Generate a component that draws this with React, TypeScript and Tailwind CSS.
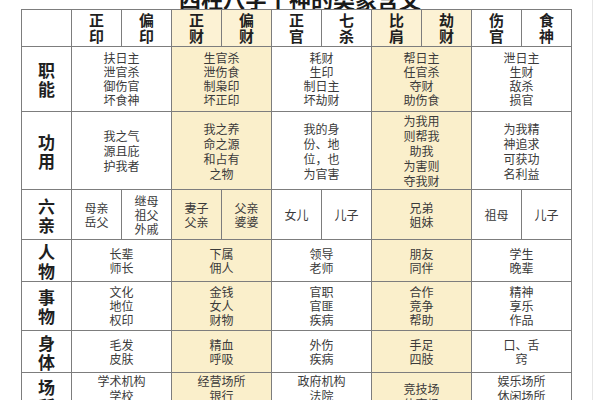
import React from 'react';

type Cell = { span: number; lines: string[] };

const heads = ['正印', '偏印', '正财', '偏财', '正官', '七杀', '比肩', '劫财', '伤官', '食神'];
const yellow = [2, 3, 6, 7];

function pairs(...groups: string[][]): Cell[] {
  return groups.map((lines) => ({ span: 2, lines }));
}

const rows: { label: string; h: string; lead: string; cells: Cell[] }[] = [
  {
    label: '职能',
    h: 'h-[65px]',
    lead: 'leading-[14px]',
    cells: pairs(
      ['扶日主', '泄官杀', '御伤官', '坏食神'],
      ['生官杀', '泄伤食', '制枭印', '坏正印'],
      ['耗财', '生印', '制日主', '坏劫财'],
      ['帮日主', '任官杀', '夺财', '助伤食'],
      ['泄日主', '生财', '敌杀', '损官'],
    ),
  },
  {
    label: '功用',
    h: 'h-[78px]',
    lead: 'leading-[15px]',
    cells: pairs(
      ['我之气', '源且庇', '护我者'],
      ['我之养', '命之源', '和占有', '之物'],
      ['我的身', '份、地', '位，也', '为官害'],
      ['为我用', '则帮我', '助我', '为害则', '夺我财'],
      ['为我精', '神追求', '可获功', '名利益'],
    ),
  },
  {
    label: '六亲',
    h: 'h-[50px]',
    lead: 'leading-[14px]',
    cells: [
      { span: 1, lines: ['母亲', '岳父'] },
      { span: 1, lines: ['继母', '祖父', '外戚'] },
      { span: 1, lines: ['妻子', '父亲'] },
      { span: 1, lines: ['父亲', '婆婆'] },
      { span: 1, lines: ['女儿'] },
      { span: 1, lines: ['儿子'] },
      { span: 2, lines: ['兄弟', '姐妹'] },
      { span: 1, lines: ['祖母'] },
      { span: 1, lines: ['儿子'] },
    ],
  },
  {
    label: '人物',
    h: 'h-[42px]',
    lead: 'leading-[14px]',
    cells: pairs(['长辈', '师长'], ['下属', '佣人'], ['领导', '老师'], ['朋友', '同伴'], ['学生', '晚辈']),
  },
  {
    label: '事物',
    h: 'h-[49px]',
    lead: 'leading-[14px]',
    cells: pairs(
      ['文化', '地位', '权印'],
      ['金钱', '女人', '财物'],
      ['官职', '官匪', '疾病'],
      ['合作', '竞争', '帮助'],
      ['精神', '享乐', '作品'],
    ),
  },
  {
    label: '身体',
    h: 'h-[42px]',
    lead: 'leading-[14px]',
    cells: pairs(['毛发', '皮肤'], ['精血', '呼吸'], ['外伤', '疾病'], ['手足', '四肢'], ['口、舌', '窍']),
  },
  {
    label: '场所',
    h: 'h-[46px]',
    lead: 'leading-[15px]',
    cells: pairs(
      ['学术机构', '学校', '出版社'],
      ['经营场所', '银行', '市场'],
      ['政府机构', '法院', '警局'],
      ['竞技场', '体育场'],
      ['娱乐场所', '休闲场所', '剧院'],
    ),
  },
];

export default function App() {
  return (
    <div className="w-[600px] h-[400px] overflow-hidden bg-white font-['Noto_Sans_CJK_SC',sans-serif] relative">
      <div className="absolute top-0 bottom-0 left-[592px] w-px bg-[#e6e6e6]" />
      <div className="h-[9px] overflow-hidden flex justify-center items-end">
        <span className="text-[22px] leading-[22px] font-bold text-[#1a1a1a] whitespace-nowrap">
          四柱八字十神的类象含义
        </span>
      </div>
      <div className="ml-[21px] w-[551px] border-l border-t border-[#7d7d7d] grid grid-cols-[repeat(11,50px)]">
        <div className="h-[37px] border-r border-b border-[#7d7d7d]" />
        {heads.map((h, i) => (
          <div
            key={h}
            className={`h-[37px] border-r border-b border-[#7d7d7d] flex flex-col items-center justify-center text-[15px] leading-[16px] font-bold text-[#1f1f1f] ${
              yellow.includes(i) ? 'bg-[#fcf2d4]' : 'bg-white'
            }`}
          >
            <span>{h[0]}</span>
            <span>{h[1]}</span>
          </div>
        ))}
        {rows.map((row) => {
          let col = 0;
          return (
            <React.Fragment key={row.label}>
              <div
                className={`${row.h} border-r border-b border-[#7d7d7d] flex flex-col items-center justify-center text-[17px] leading-[19px] font-bold text-[#1f1f1f]`}
              >
                <span>{row.label[0]}</span>
                <span>{row.label[1]}</span>
              </div>
              {row.cells.map((c, j) => {
                const isYellow = yellow.includes(col);
                col += c.span;
                return (
                  <div
                    key={j}
                    className={`${row.h} ${c.span === 2 ? 'col-span-2' : ''} ${row.lead} border-r border-b border-[#7d7d7d] flex flex-col items-center justify-center text-[12px] text-[#3a3a3a] whitespace-nowrap ${
                      isYellow ? 'bg-[#faefcb]' : 'bg-white'
                    }`}
                  >
                    {c.lines.map((l, k) => (
                      <span key={k}>{l}</span>
                    ))}
                  </div>
                );
              })}
            </React.Fragment>
          );
        })}
      </div>
    </div>
  );
}
